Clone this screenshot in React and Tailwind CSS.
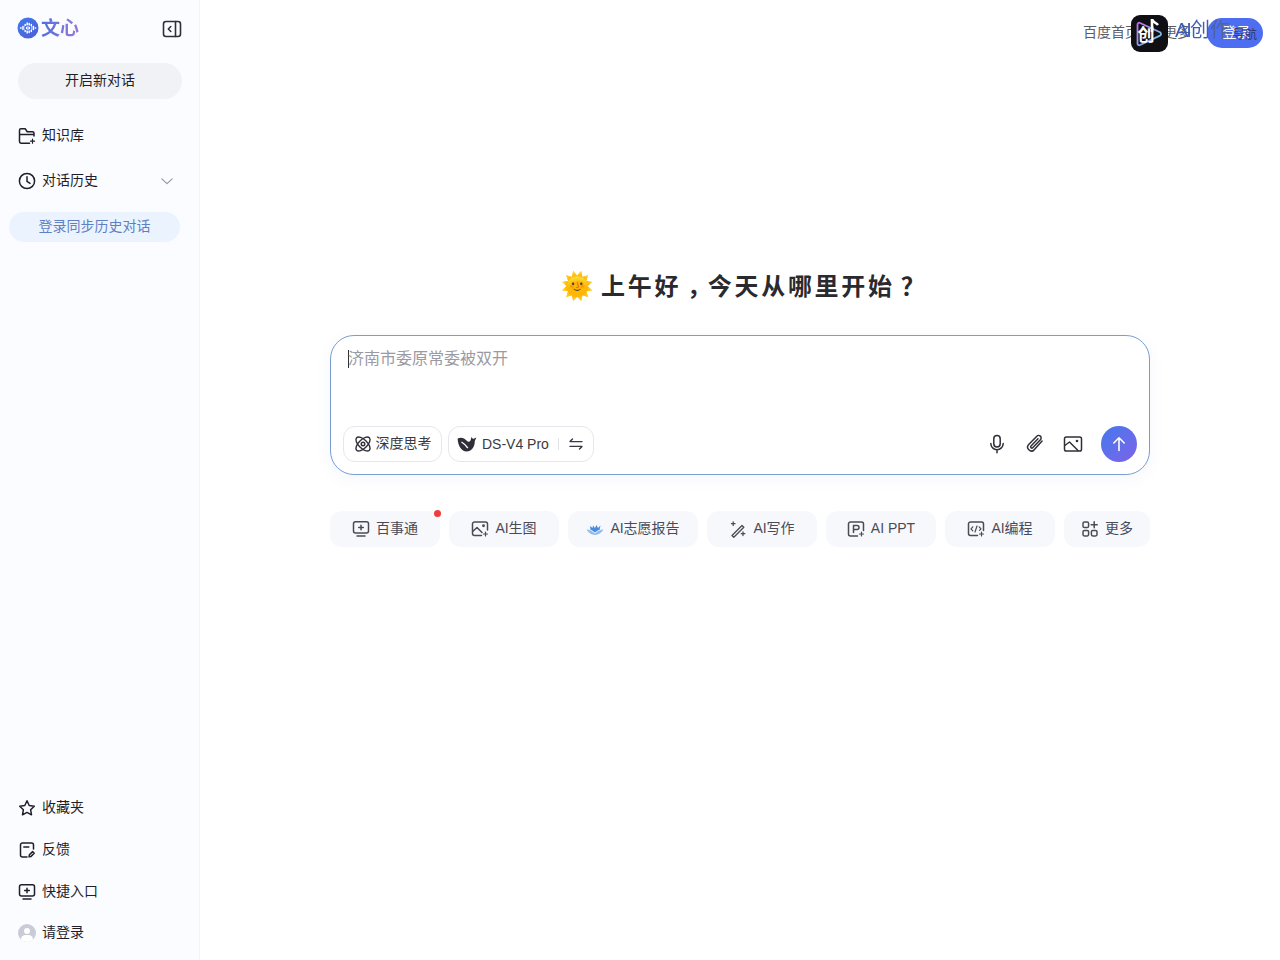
import React from "react";

const S = ({ children, size = 18, sw = 1.5, className = "" }) => (
  <svg width={size} height={size} viewBox="0 0 18 18" fill="none" stroke="currentColor" strokeWidth={sw} strokeLinecap="round" strokeLinejoin="round" className={`shrink-0 ${className}`}>
    {children}
  </svg>
);

const Spark = ({ x, y, r = 2 }) => (
  <path d={`M${x} ${y - r}V${y + r}M${x - r} ${y}H${x + r}`} strokeWidth="1.2" />
);

const FolderIcon = () => (
  <S><path d="M16 9V6.200a1.500 1.500 0 0 0-1.500-1.500H9.200L7.200 1.800H3A1.500 1.500 0 0 0 1.500 3.300V14.600A1.600 1.600 0 0 0 3 16.200h8.500M1.500 7.400H16" /><Spark x={14.500} y={14.200} /></S>
);
const ClockIcon = () => (
  <S><circle cx="9" cy="9" r="7.600" /><path d="M9 4.800V9.400l3 2" /></S>
);
const StarIcon = () => (
  <S><path d="M9 1.800l2.200 4.700 5.100.7-3.700 3.500.9 5.100L9 13.400l-4.500 2.400.9-5.100L1.700 7.200l5.100-.7z" /></S>
);
const FeedbackIcon = () => (
  <S><path d="M15.500 8V4a2 2 0 0 0-2-2H4.500a2 2 0 0 0-2 2v10a2 2 0 0 0 2 2H9M5.800 6h5" /><path d="M11 15.800l.4-2 3.200-3.200 1.600 1.600-3.200 3.200z" /></S>
);
const ScreenIcon = ({ size = 18 }) => (
  <S size={size}><rect x="1.500" y="1.800" width="15" height="11.200" rx="2" /><path d="M5 16h8M9 5.200v4.600M6.700 7.500h4.600" /></S>
);
const AvatarIcon = () => (
  <span className="relative h-[18px] w-[18px] shrink-0 overflow-hidden rounded-full bg-[#c9ccd6]">
    <span className="absolute left-[6px] top-[3.500px] h-[6px] w-[6px] rounded-full bg-white" />
    <span className="absolute left-[3px] top-[10.500px] h-[9px] w-[12px] rounded-full bg-white" />
  </span>
);

const NavItem = ({ icon, label, className = "" }) => (
  <div className={`flex items-center gap-[6px] pl-[18px] text-[14px] leading-[20px] text-[#1f1f2b] ${className}`}>
    {icon}
    <span className="relative top-[-1px]">{label}</span>
  </div>
);

const Chip = ({ icon, label, w, children }) => (
  <div className={`relative flex h-[36px] items-center justify-center gap-[6px] rounded-[12px] bg-[#f7f8fc] text-[14px] text-[#4b4b55] ${w}`}>
    {icon}
    <span className="relative top-[-1px]">{label}</span>
    {children}
  </div>
);

export default function App() {
  return (
    <div className="relative flex h-[960px] w-[1280px] overflow-hidden bg-white font-['Liberation_Sans','Noto_Sans_CJK_SC',sans-serif]">
      <aside className="flex w-[200px] shrink-0 flex-col border-r border-[#f2f3f7] bg-[#fbfcff] pb-[17px]">
        <div className="flex h-[56px] items-center justify-between pl-[17px] pr-[17px]">
          <div className="flex items-center gap-[2px]">
            <svg width="22" height="22" viewBox="0 0 22 22" className="shrink-0">
              <defs>
                <linearGradient id="lg" x1="0" y1="0" x2="1" y2="1">
                  <stop offset="0" stopColor="#3f7cf0" />
                  <stop offset="1" stopColor="#4f5bd5" />
                </linearGradient>
              </defs>
              <circle cx="11" cy="11" r="10.500" fill="url(#lg)" />
              <path d="M3.500 11h.6M6 9.500v3M8.200 7.500v7M10.200 6v10M12.200 6.500v9M14.300 7.500v7M16.400 9.500v3M18.300 11h.4" stroke="#fff" strokeWidth="1.500" strokeLinecap="round" />
              <path d="M7.500 9.500c2.300-1.800 4.700-1.800 7 0v3c-2.300 1.800-4.700 1.800-7 0z" fill="#4a6fe6" />
              <path d="M9.500 10.200v1.600M11 9.600v2.800M12.500 10.200v1.600" stroke="#fff" strokeWidth="1.100" strokeLinecap="round" />
            </svg>
            <span className="relative top-[1px] bg-gradient-to-r from-[#4a6ee0] to-[#9a78d8] bg-clip-text text-[19px] font-bold leading-[24px] text-transparent">文心</span>
          </div>
          <svg width="20" height="20" viewBox="0 0 20 20" fill="none" stroke="#2f2f38" strokeWidth="1.600" strokeLinecap="round" strokeLinejoin="round" className="mt-[1px]">
            <rect x="1.500" y="2.500" width="17" height="15" rx="2.500" />
            <path d="M13.500 2.500v15M8.800 7.500L6.300 10l2.500 2.500" />
          </svg>
        </div>
        <div className="ml-[18px] mr-[17px] mt-[7px] flex h-[36px] items-center justify-center rounded-full bg-[#f1f2f5] pb-[2px] text-[14px] text-[#1f1f2b]">开启新对话</div>
        <NavItem className="mt-[27px]" icon={<FolderIcon />} label="知识库" />
        <div className="mt-[25px] flex items-center justify-between pr-[25px]">
          <NavItem icon={<ClockIcon />} label="对话历史" />
          <svg width="14" height="14" viewBox="0 0 14 14" fill="none" stroke="#8f93a3" strokeWidth="1.100" strokeLinecap="round" strokeLinejoin="round"><path d="M1.800 4.800L7 9.600l5.200-4.800" /></svg>
        </div>
        <div className="ml-[9px] mt-[21px] flex h-[30px] w-[171px] items-center justify-center rounded-full bg-[#ebf3fe] pb-[2px] text-[14px] text-[#5f7fc4]">登录同步历史对话</div>
        <div className="mt-auto flex flex-col gap-[22px]">
          <NavItem icon={<StarIcon />} label="收藏夹" />
          <NavItem icon={<FeedbackIcon />} label="反馈" />
          <NavItem icon={<ScreenIcon />} label="快捷入口" />
          <NavItem className="!mt-[-1px]" icon={<AvatarIcon />} label="请登录" />
        </div>
      </aside>

      <main className="relative flex flex-1 flex-col items-center">
        <h1 className="mt-[269px] flex h-[34px] w-[358px] items-center text-[24px] font-bold leading-[34px] tracking-[2.700px] text-[#2a2a2e]">
          <span className="mr-[10px] w-[30px] shrink-0 text-[26px] font-normal tracking-normal">🌞</span>
          <span className="relative top-[1px] whitespace-nowrap [font-feature-settings:'chws'_0,'palt'_0]">
            上午好<span className="relative left-[6px]">，</span>今天从哪里开始<span className="relative left-[6px]">？</span>
          </span>
        </h1>

        <div className="mt-[32px] flex h-[140px] w-[820px] flex-col justify-between rounded-[24px] border border-[#7a9ed1] bg-white pb-[12px] pl-[12px] pr-[12px] pt-[11px] shadow-[0_4px_16px_rgba(90,110,200,0.06)]">
          <div className="flex items-center pl-[5px] text-[16px] leading-[24px] text-[#9a9aa3]">
            <span className="mr-[-1px] h-[18px] w-px bg-[#333]" />
            济南市委原常委被双开
          </div>
          <div className="flex items-center justify-between">
            <div className="flex items-center gap-[6px]">
              <div className="flex h-[36px] w-[99px] items-center justify-center gap-[4px] rounded-[12px] border border-[#e6e7ec] text-[14px] text-[#3a3a42]">
                <svg width="18" height="18" viewBox="0 0 18 18" fill="none" stroke="#2f2f38" strokeWidth="1.400" className="shrink-0">
                  <ellipse cx="9" cy="9" rx="9" ry="4.300" transform="rotate(45 9 9)" />
                  <ellipse cx="9" cy="9" rx="9" ry="4.300" transform="rotate(-45 9 9)" />
                  <circle cx="9" cy="9" r="1.800" />
                </svg>
                <span className="relative top-[-1px]">深度思考</span>
              </div>
              <div className="flex h-[36px] w-[146px] items-center rounded-[12px] border border-[#e6e7ec] pl-[8px] text-[14px] text-[#3a3a42]">
                <svg width="20" height="18" viewBox="0 0 20 18" className="shrink-0">
                  <path d="M.6 3.500C4 1.800 7.500 3 9.500 5.500 11 7.300 12.500 7.300 13.500 5.500L14.500 2 16 4 19.400 2.500 17.800 6C17.800 12 14.500 16.500 9.500 16.500 4.500 16.500 1 11 .6 3.500z" fill="#2f2f38" />
                  <path d="M4.500 7C7 8.500 9 10.500 10.800 13" stroke="#fff" strokeWidth="1.300" fill="none" />
                </svg>
                <span className="ml-[5px]">DS-V4 Pro</span>
                <span className="ml-[9px] h-[12px] w-px bg-[#e0e1e6]" />
                <svg width="16" height="16" viewBox="0 0 16 16" fill="none" stroke="#3a3a42" strokeWidth="1.400" strokeLinecap="round" strokeLinejoin="round" className="ml-[9px]">
                  <path d="M14 5.600H2L4.500 3M2 10.400h12L11.500 13" />
                </svg>
              </div>
            </div>
            <div className="flex items-center">
              <svg width="20" height="20" viewBox="0 0 20 20" fill="none" stroke="#2f2f38" strokeWidth="1.500" strokeLinecap="round">
                <rect x="6.800" y="1.500" width="6.400" height="11.500" rx="3.200" />
                <path d="M3.800 9.500a6.200 6.200 0 0 0 12.400 0M10 15.700v3" />
              </svg>
              <svg width="20" height="20" viewBox="0 0 24 24" fill="none" stroke="#2f2f38" strokeWidth="1.800" strokeLinecap="round" strokeLinejoin="round" className="ml-[18px]">
                <path d="M20.500 8.500 11 19a4.600 4.600 0 0 1-6.600-6.400l9.800-10a3 3 0 0 1 4.300 4.200l-9.300 9.600a1.400 1.400 0 0 1-2-2l8.400-8.700" />
              </svg>
              <svg width="20" height="20" viewBox="0 0 20 20" fill="none" stroke="#2f2f38" strokeWidth="1.500" strokeLinejoin="round" className="ml-[18px]">
                <rect x="1.500" y="3" width="17" height="14" rx="1.800" />
                <path d="M1.800 11.500 6.500 8l9 9" />
                <circle cx="14" cy="7" r="1.300" fill="#2f2f38" stroke="none" />
              </svg>
              <div className="ml-[18px] flex h-[36px] w-[36px] items-center justify-center rounded-full bg-gradient-to-br from-[#3f78ee] to-[#7a63e8]">
                <svg width="16" height="16" viewBox="0 0 16 16" fill="none" stroke="#fff" strokeWidth="1.600" strokeLinecap="round" strokeLinejoin="round">
                  <path d="M8 14.500V2M2.800 7 8 1.800 13.200 7" />
                </svg>
              </div>
            </div>
          </div>
        </div>

        <div className="mt-[36px] flex w-[820px] justify-between">
          <Chip w="w-[110px]" label="百事通" icon={<ScreenIcon />}>
            <span className="absolute right-[-1px] top-[-1px] h-[7px] w-[7px] rounded-full bg-[#ef3d3d]" />
          </Chip>
          <Chip w="w-[110px]" label="AI生图" icon={
            <S><path d="M10.500 15.500H3.500a2 2 0 0 1-2-2V4a2 2 0 0 1 2-2h11a2 2 0 0 1 2 2v6M1.700 11.500 6 7.500l5 5" /><circle cx="12.500" cy="5.800" r=".7" fill="currentColor" /><Spark x={14.500} y={14} /></S>
          } />
          <Chip w="w-[130px]" label="AI志愿报告" icon={
            <svg width="18" height="18" viewBox="0 0 18 18" className="shrink-0">
              <path d="M.5 9.500c3 0 6 1.800 8.500 4 2.500-2.200 5.500-4 8.500-4-2 3.300-5 5.500-8.500 5.500S2.500 12.800.5 9.500z" fill="#8fbcec" />
              <path d="M4.500 10c1.800.3 3.200 1.300 4.500 2.500 1.300-1.200 2.700-2.200 4.500-2.500L14.500 5.500 12 8 10.500 5 9 8 7 5.500 6.500 8 4 6z" fill="#4a8ade" />
            </svg>
          } />
          <Chip w="w-[110px]" label="AI写作" icon={
            <S sw={1.300}><path d="M3 15.500 13 5.500l1.800 1.800-10 10zM2.500 3.700h3.500M4.200 2v3.400" /><path d="M14 12v3.500M12.300 13.700h3.500" /></S>
          } />
          <Chip w="w-[110px]" label="AI PPT" icon={
            <S><path d="M10.500 16H3.500a2 2 0 0 1-2-2V4a2 2 0 0 1 2-2h11a2 2 0 0 1 2 2v6.500" /><path d="M6.500 12.500V5.500H10a2 2 0 0 1 0 4H6.500" /><Spark x={14.500} y={14} /></S>
          } />
          <Chip w="w-[110px]" label="AI编程" icon={
            <S><path d="M10.500 15.500H3.500a2 2 0 0 1-2-2V4a2 2 0 0 1 2-2h11a2 2 0 0 1 2 2v6.500" /><path d="M5.800 6.800 4 8.800l1.800 2M12.200 6.800l1.800 2-1.500 1.600M10 6 8 12" strokeWidth={1.200} /><Spark x={14.500} y={14} /></S>
          } />
          <Chip w="w-[86px]" label="更多" icon={
            <S><rect x="2" y="2" width="5.600" height="5.600" rx="1.400" /><rect x="2" y="10.400" width="5.600" height="5.600" rx="1.400" /><rect x="10.400" y="10.400" width="5.600" height="5.600" rx="1.400" /><path d="M13.200 1.800v6M10.200 4.800h6" /></S>
          } />
        </div>

        <div className="absolute left-[883px] top-[23px] flex items-center text-[14px] leading-[18px] text-[#5c5c66]">
          <span>百度首页</span>
          <span className="ml-[24px]">更多</span>
        </div>
        <div className="absolute left-[1007px] top-[18px] flex h-[30px] w-[56px] items-center justify-center rounded-full bg-[#4e6ef2] pb-[2px] pl-[3px] text-[14px] text-white">登录</div>
        <span className="absolute left-[975px] top-[16px] bg-gradient-to-r from-[#3f5cb4] via-[#3f5cb4] to-[#5a6590] bg-clip-text text-[20px] leading-[28px] text-transparent">
          <span className="tracking-[-2px]">AI</span>创作
        </span>
        <span className="absolute left-[1033px] top-[28px] text-[12px] leading-[14px] text-[#2f3463]">导航</span>
        <div className="absolute left-[931px] top-[15px] flex h-[37px] w-[37px] items-center justify-center rounded-[9px] bg-[#101014]">
          <svg width="29" height="29" viewBox="0 0 29 29" fill="none" className="absolute left-[4px] top-[4px]">
            <defs>
              <linearGradient id="tri" x1="0" y1="0" x2="1" y2="1">
                <stop offset="0" stopColor="#c56bf0" />
                <stop offset="1" stopColor="#5fd4e8" />
              </linearGradient>
            </defs>
            <path d="M2.500 5.500c0-1.500 1.400-2.200 2.600-1.500L25 13.200c1.300.8 1.300 2.600 0 3.400L5.100 26c-1.200.7-2.600 0-2.600-1.500z" stroke="url(#tri)" strokeWidth="1.800" />
            <path d="M17 0v13" stroke="#fff" strokeWidth="2.600" />
            <path d="M17 .5c1 3 4 3 6 5.500" stroke="#fff" strokeWidth="2.600" />
          </svg>
          <span className="relative ml-[-7px] mt-[4px] text-[17px] font-bold leading-[20px] text-white">创</span>
        </div>
      </main>
    </div>
  );
}
